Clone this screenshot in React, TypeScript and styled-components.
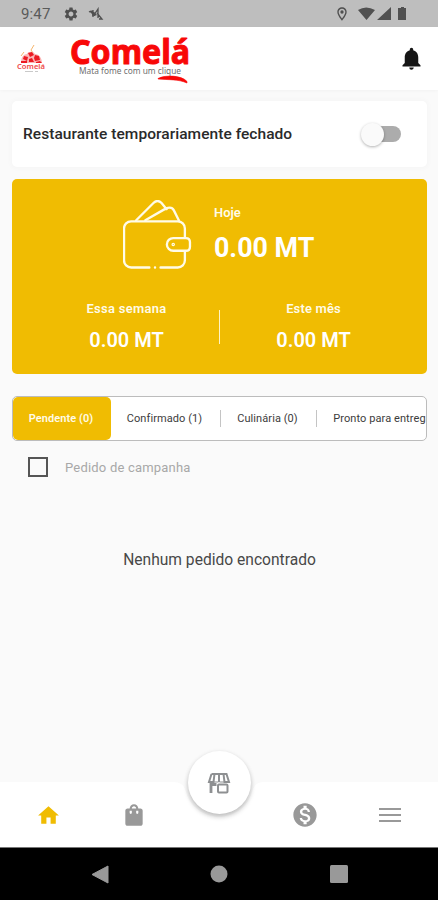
import React from 'react';
import styled, { createGlobalStyle } from 'styled-components';
import { MdHome, MdShoppingBag, MdMonetizationOn, MdNotifications, MdSettings, MdOutlineLocationOn } from 'react-icons/md';

const YELLOW = '#f0bc02';

const Global = createGlobalStyle`
  * { box-sizing: border-box; }
  body { margin: 0; background: #fafafa; font-family: Roboto, "Liberation Sans", sans-serif; overflow: hidden; }
  svg { display: block; flex: none; }
`;
const Screen = styled.div`
  width: 438px; height: 900px; display: flex; flex-direction: column; background: #fafafa; overflow: hidden;
`;
const StatusBar = styled.div`
  height: 27px; flex: none; background: #bebebe; color: #505050; display: flex; align-items: center;
  justify-content: space-between; padding: 1px 29px 0 21px;
`;
const StatusGroup = styled.div<{ $gap: number }>`
  display: flex; align-items: center; gap: ${p => p.$gap}px;
`;
const Clock = styled.span`
  font-size: 15px; line-height: 18px; color: #5a5a5a; width: 31px; margin-right: 2px; letter-spacing: 0.15px;
`;
const Header = styled.header`
  height: 63px; flex: none; background: #fff; display: flex; align-items: center; padding: 0 13px 0 15px;
  justify-content: space-between; box-shadow: 0 1px 3px rgba(0,0,0,.03);
`;
const Brand = styled.div`display: flex; align-items: center; gap: 22px;`;
const Content = styled.main`
  flex: 1; display: flex; flex-direction: column; padding: 11px 11px 0 12px;
`;
const ClosedCard = styled.section`
  height: 66px; border-radius: 5px; background: #fff; box-shadow: 0 0 5px 2px rgba(0,0,0,.018);
  display: flex; align-items: center; justify-content: space-between; padding: 0 26px 0 11px;
`;
const ClosedLabel = styled.span`
  font-size: 15.5px; font-weight: 500; color: #2a2a2a; white-space: nowrap; letter-spacing: 0.05px;
`;
const Switch = styled.div`
  width: 36px; height: 16px; border-radius: 8px; background: #acacac; display: flex; align-items: center;
`;
const Knob = styled.div`
  width: 23px; height: 23px; flex: none; margin-left: -4px; border-radius: 50%; background: #fafafa;
  box-shadow: 0 1px 3px rgba(0,0,0,.3);
`;
const Earnings = styled.section`
  height: 195px; margin-top: 12px; border-radius: 5px; background: ${YELLOW}; color: #fffbe8;
  display: flex; flex-direction: column;
`;
const Today = styled.div`
  display: flex; height: 113px; padding: 21px 0 0 111px; gap: 22px;
`;
const Stack = styled.div<{ $center?: boolean }>`
  display: flex; flex-direction: column; align-items: ${p => (p.$center ? 'center' : 'flex-start')}; white-space: nowrap;
`;
const Caption = styled.span<{ $spacing?: number }>`
  font-size: 12.9px; line-height: 16px; font-weight: 600; letter-spacing: ${p => p.$spacing ?? 0}px;
`;
const Amount = styled.span<{ $large?: boolean }>`
  font-size: ${p => (p.$large ? 26.8 : 20)}px; line-height: ${p => (p.$large ? 32 : 24)}px; font-weight: ${p => (p.$large ? 700 : 600)};
  margin-top: 11px; color: #fff;
`;
const TodayStack = styled(Stack)`padding-top: 5px;`;
const Periods = styled.div`
  display: grid; grid-template-columns: 1fr 2px 1fr; padding: 9px 21px 0 22px;
`;
const PeriodLine = styled.div`
  width: 1px; height: 34px; background: #fff3c4; margin-top: 9px;
`;
const Tabs = styled.nav`
  height: 45px; flex: none; margin-top: 22px; border: 1px solid #bcbcbc; border-radius: 5px; background: #fff;
  display: flex; align-items: center; overflow: hidden;
`;
const Tab = styled.button<{ $active?: boolean; $width: number }>`
  border: 0; margin: 0; padding: 0 2px 0 0; height: 43px; flex: none; width: ${p => p.$width}px; border-radius: 5px;
  font: ${p => (p.$active ? 600 : 400)} 11px Roboto, sans-serif; white-space: nowrap; text-align: center;
  letter-spacing: 0.08px;
  color: ${p => (p.$active ? '#fffbe8' : '#3c3c3c')}; background: ${p => (p.$active ? YELLOW : 'transparent')};
`;
const TabLine = styled.div`width: 1px; height: 17px; background: #c4c4c4; flex: none;`;
const CampaignRow = styled.label`
  display: flex; align-items: center; height: 22px; margin: 15px 0 0 16px; gap: 17px;
  font-size: 13px; color: #a8a8a8; letter-spacing: 0.2px;
`;
const Box = styled.span`width: 20px; height: 20px; border: 2px solid #555;`;
const Empty = styled.p`
  margin: 72px 0 0; text-align: center; font-size: 15.6px; line-height: 20px; color: #484848;
`;
const BottomBar = styled.div`
  height: 97px; flex: none; display: grid;
`;
const Backdrop = styled.svg`grid-area: 1 / 1; width: 438px; height: 97px;`;
const NavItems = styled.nav`
  grid-area: 1 / 1; display: grid; grid-template-columns: repeat(5, 1fr); padding: 0 5px 0 6px; justify-items: center; z-index: 1;
`;
const NavItem = styled.button<{ $active?: boolean }>`
  border: 0; background: none; padding: 0; margin-top: 52px; height: 26px; display: flex; align-items: center;
  color: ${p => (p.$active ? YELLOW : '#999')};
`;
const StoreButton = styled.button`
  border: 0; padding: 0; width: 63px; height: 63px; border-radius: 50%; background: #fff; margin-top: 1px;
  display: flex; align-items: center; justify-content: center;
  box-shadow: 0 3px 5px rgba(0,0,0,.2), 0 1px 5px rgba(0,0,0,.08);
`;
const SystemBar = styled.div`
  height: 53px; flex: none; background: #000; border-top: 1px solid #777; display: grid;
  grid-template-columns: repeat(3, 119.5px); justify-content: center; justify-items: center; align-items: center;
`;

const CrestLogo = () => (
  <svg width="32" height="32" viewBox="0 0 32 32">
    <path d="M19 2 16 7l2 3M9 9l-3 4" stroke="#f6b56c" strokeWidth="1" fill="none" />
    <path d="M6 20c0-6 3-9 6-9 1-3 6-3 8 0 4 0 7 4 7 9Z" fill="#fbb5b5" />
    <path d="m13 10 4-1 2 3-4 2ZM9 13l4 1-1 4-4-2ZM20 12l4 1 1 4-5 1-1-3ZM14 16l3-1 2 4h-5ZM6 18h6v2H6ZM21 19l4-1 2 2h-6Z" fill="#ec1b22" />
    <text x="2" y="26" textLength="28" lengthAdjust="spacingAndGlyphs" fontFamily="Noto Sans" fontWeight="600" fontSize="7.500" fill="#f04a4a">Comelá</text>
    <path d="M10 28.500h8M20 28.500h3" stroke="#bbb" strokeWidth=".8" />
  </svg>
);
const WordLogo = () => (
  <svg width="124" height="54" viewBox="0 0 124 54">
    <text x="1" y="32" textLength="120" lengthAdjust="spacingAndGlyphs" fontFamily="Noto Sans" fontWeight="700" fontSize="33.500" fill="#f80808" stroke="#f80808" strokeWidth="1" strokeLinejoin="round">Comelá</text>
    <text x="10" y="42" textLength="102" lengthAdjust="spacingAndGlyphs" fontFamily="Noto Sans" fontSize="8" fill="#707070">Mata fome com um clique</text>
    <path d="M89 46.500c8-4 24-3 29 3v1.500c-9-4-18-3-29-4Z" fill="#f80808" stroke="#f80808" strokeWidth=".6" />
  </svg>
);
const Wallet = () => (
  <svg width="69" height="70" viewBox="0 0 68 69" fill="none" stroke="#fffbe8" strokeWidth="2.3" strokeLinecap="round" strokeLinejoin="round">
    <path d="M26 66.500H8a7 7 0 0 1-7-7V28a7 7 0 0 1 7-7h46a7 7 0 0 1 7 7v9M61 51v8.500a7 7 0 0 1-7 7H37M31.500 66.500h.1" />
    <path d="M62 37.500H49.500a6 6 0 0 0 0 12.500H62q4 0 4-4v-4.500q0-4-4-4Z" />
    <path d="M13 20 30 3q4-4 8 0l5 6M22 20 42 8.500q6-2.500 8 1.500l5 10" />
    <circle cx="49.500" cy="43.800" r=".6" />
  </svg>
);
const StoreIcon = () => (
  <svg width="24" height="24" viewBox="0 0 24 24" fill="none" stroke="#8e9092" strokeWidth="2">
    <path d="M4.500 3h15l2.500 8h-4.500L16.500 3M12 3v8M7.500 3 6.500 11H2l2.500-8" />
    <path d="M6.500 11h5M12.500 11h5" strokeWidth="1.200" />
    <path d="M4 12v10M4 13.500h5.500" strokeWidth="2.800" />
    <rect x="11" y="13.500" width="9.500" height="8" rx="1" />
  </svg>
);

export default function App() {
  return (
    <>
      <Global />
      <Screen>
        <StatusBar>
          <StatusGroup $gap={9}>
            <Clock>9:47</Clock>
            <MdSettings size={16} />
            <svg width="16" height="14" viewBox="0 0 16 14" fill="none" stroke="#505050" strokeWidth="1.300">
              <path d="M1 5q3-2 5 1M4 8h3M5 3v7M6 8 10 2v9M9 6l5 6h-3" />
              <path d="M2 5h4l3 3-3 1Z" fill="#505050" stroke="none" />
            </svg>
          </StatusGroup>
          <StatusGroup $gap={4}>
            <MdOutlineLocationOn size={16} />
            <svg width="55" height="16" viewBox="0 0 55 16" fill="#505050">
              <path d="M4 4q8-5 17 0l-8.500 10ZM37 1v13H23ZM47 2V1h3v1h2v12h-8V2Z" />
            </svg>
          </StatusGroup>
        </StatusBar>
        <Header>
          <Brand><CrestLogo /><WordLogo /></Brand>
          <MdNotifications size={27} color="#161616" />
        </Header>
        <Content>
          <ClosedCard>
            <ClosedLabel>Restaurante temporariamente fechado</ClosedLabel>
            <Switch><Knob /></Switch>
          </ClosedCard>
          <Earnings>
            <Today>
              <Wallet />
              <TodayStack><Caption>Hoje</Caption><Amount $large>0.00 MT</Amount></TodayStack>
            </Today>
            <Periods>
              <Stack $center><Caption $spacing={0.32}>Essa semana</Caption><Amount>0.00 MT</Amount></Stack>
              <PeriodLine />
              <Stack $center><Caption $spacing={0.2}>Este mês</Caption><Amount>0.00 MT</Amount></Stack>
            </Periods>
          </Earnings>
          <Tabs>
            <Tab $active $width={98}>Pendente (0)</Tab>
            <Tab $width={109}>Confirmado (1)</Tab>
            <TabLine />
            <Tab $width={95}>Culinária (0)</Tab>
            <TabLine />
            <Tab $width={133}>Pronto para entrega</Tab>
          </Tabs>
          <CampaignRow><Box />Pedido de campanha</CampaignRow>
          <Empty>Nenhum pedido encontrado</Empty>
        </Content>
        <BottomBar>
          <Backdrop viewBox="0 0 438 97">
            <path d="M0 32H174Q182 32 185 39C194 76 244 76 253 39Q256 32 264 32H438V97H0Z" fill="#fff" />
          </Backdrop>
          <NavItems>
            <NavItem $active><MdHome size={25} /></NavItem>
            <NavItem><MdShoppingBag size={26} /></NavItem>
            <StoreButton><StoreIcon /></StoreButton>
            <NavItem><MdMonetizationOn size={28} /></NavItem>
            <NavItem>
              <svg width="22" height="16" viewBox="0 0 22 16" stroke="#999" strokeWidth="2"><path d="M0 2h22M0 8h22M0 14h22" /></svg>
            </NavItem>
          </NavItems>
        </BottomBar>
        <SystemBar>
          <svg width="18" height="19" viewBox="0 0 18 19"><path d="M17 1v17L1 9.500Z" fill="#999" stroke="#999" strokeLinejoin="round" /></svg>
          <svg width="18" height="18" viewBox="0 0 18 18"><circle cx="9" cy="9" r="8.500" fill="#999" /></svg>
          <svg width="18" height="18" viewBox="0 0 18 18"><rect width="18" height="18" rx="1.500" fill="#999" /></svg>
        </SystemBar>
      </Screen>
    </>
  );
}
